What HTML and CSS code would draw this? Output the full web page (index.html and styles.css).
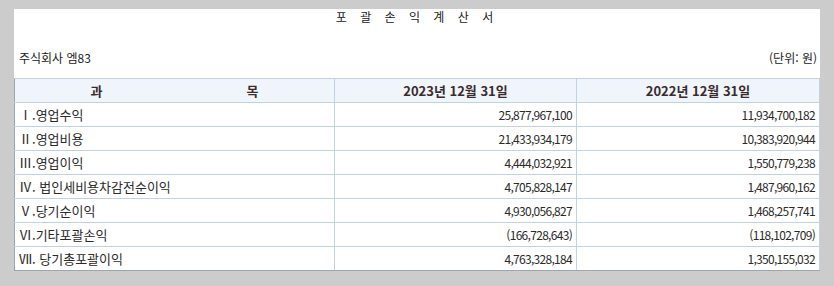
FILE: index.html
```html
<!DOCTYPE html>
<html lang="ko">
<head>
<meta charset="utf-8">
<title>포괄손익계산서</title>
<link rel="stylesheet" href="styles.css">
</head>
<body>
<div class="sheet">
  <h1 class="title">포 괄 손 익 계 산 서</h1>
  <div class="info">
    <span>주식회사 엠83</span>
    <span>(단위: 원)</span>
  </div>
  <table class="stmt">
    <colgroup>
      <col class="c-name">
      <col class="c-val">
      <col>
    </colgroup>
    <thead>
      <tr>
        <th><span class="gap">과</span><span>목</span></th>
        <th>2023년 12월 31일</th>
        <th>2022년 12월 31일</th>
      </tr>
    </thead>
    <tbody>
      <tr><td>Ⅰ.영업수익</td><td class="num">25,877,967,100</td><td class="num">11,934,700,182</td></tr>
      <tr><td>Ⅱ.영업비용</td><td class="num">21,433,934,179</td><td class="num">10,383,920,944</td></tr>
      <tr><td>Ⅲ.영업이익</td><td class="num">4,444,032,921</td><td class="num">1,550,779,238</td></tr>
      <tr><td>Ⅳ. 법인세비용차감전순이익</td><td class="num">4,705,828,147</td><td class="num">1,487,960,162</td></tr>
      <tr><td>Ⅴ.당기순이익</td><td class="num">4,930,056,827</td><td class="num">1,468,257,741</td></tr>
      <tr><td>Ⅵ.기타포괄손익</td><td class="num">(166,728,643)</td><td class="num">(118,102,709)</td></tr>
      <tr><td>Ⅶ. 당기총포괄이익</td><td class="num">4,763,328,184</td><td class="num">1,350,155,032</td></tr>
    </tbody>
  </table>
</div>
</body>
</html>
```

FILE: styles.css
```css
html, body {
  margin: 0;
  padding: 0;
  background: #cccccc;
}
body {
  font-family: "Noto Sans CJK KR", "Noto Sans", sans-serif;
  font-size: 12px;
  color: #2a2a2a;
}
.sheet {
  margin: 15px 0 0 14px;
  width: 806px;
  background: #ffffff;
}
.title {
  margin: -6px 0 0 0;
  font-size: 12px;
  font-weight: normal;
  line-height: 16px;
  text-align: center;
  letter-spacing: 5px;
  color: #222222;
}
.info {
  display: flex;
  justify-content: space-between;
  margin-top: 25px;
  margin-bottom: 12px;
  padding: 0 3px 0 5px;
  line-height: 16px;
  font-size: 12px;
  color: #222222;
}
.stmt {
  width: 100%;
  border-collapse: collapse;
  table-layout: fixed;
  border-left: 1px solid #9aa6b2;
  border-bottom: 1px solid #9aa6b2;
}
.c-name { width: 320px; }
.c-val { width: 242px; }
.stmt th, .stmt td {
  border: 1px solid #c3d2e2;
  height: 23px;
  padding: 0 4px;
  line-height: 14px;
  white-space: nowrap;
  font-size: 13px;
}
.stmt tr:last-child td { border-bottom-color: #9aa6b2; }
.stmt tr th:first-child, .stmt tr td:first-child { border-left-color: #9aa6b2; }
.stmt th {
  background: #f0f5fc;
  font-weight: bold;
  color: #3a2c2c;
  text-align: center;
}
.gap { margin-right: 144px; }
.stmt td.num {
  text-align: right;
  font-size: 12px;
  letter-spacing: -0.7px;
  padding-right: 4px;
}
```
